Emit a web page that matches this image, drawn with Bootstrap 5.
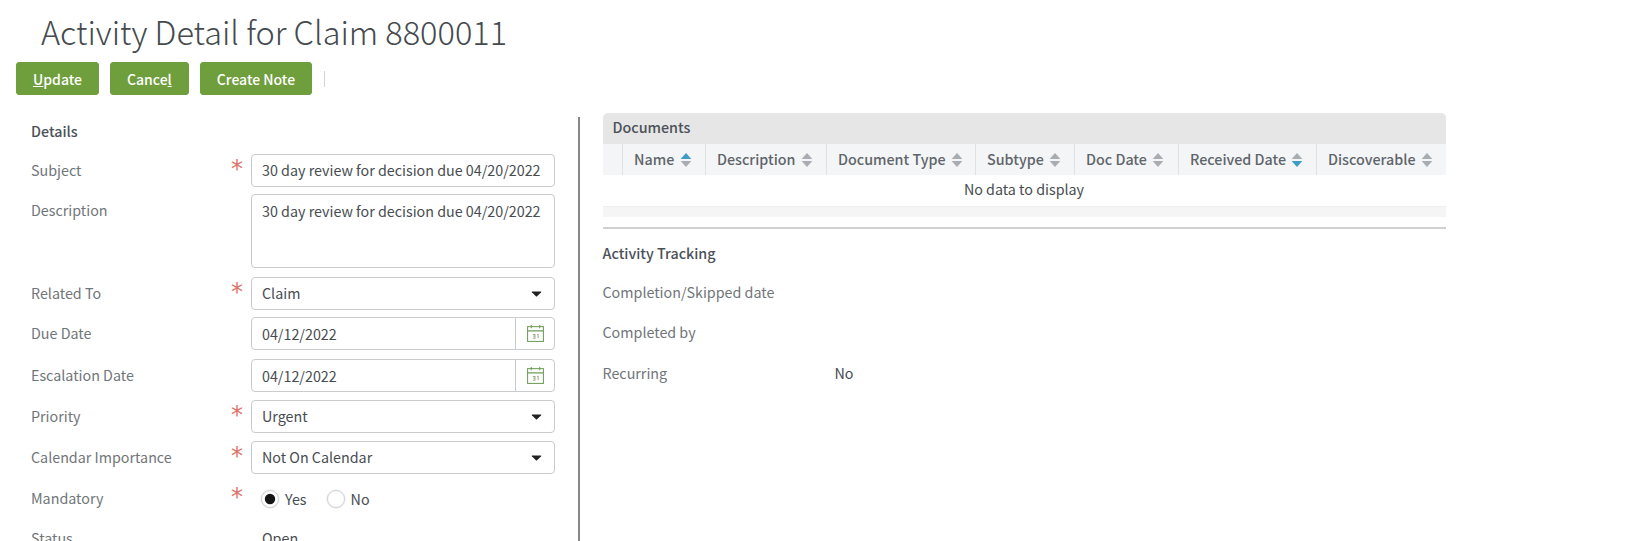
<!DOCTYPE html>
<html lang="en">
<head>
  <meta charset="UTF-8">
  <title>Activity Detail for Claim 8800011</title>
  <link href="https://cdn.jsdelivr.net/npm/bootstrap@5.3.0/dist/css/bootstrap.min.css" rel="stylesheet">
  <style>
    html, body { height: 541px; overflow: hidden; }
    body {
      font-family: "Noto Sans CJK SC", "Noto Sans", sans-serif;
      font-size: 14.3px;
      color: #474c50;
      background: #fff;
    }
    .page-title {
      font-size: 32.5px;
      font-weight: 300;
      line-height: 46px;
      color: #454a4e;
      margin: 0;
      padding: 8px 0 0 41px;
      height: 62px;
    }
    .action-bar { padding-left: 16px; gap: 11px; height: 33px; }
    .btn-claim {
      background: #6f9e3c;
      border: 1px solid #6f9e3c;
      color: #fff;
      font-size: 14px;
      font-weight: 500;
      height: 33px;
      padding: 0 16px;
      line-height: 28px;
      border-radius: 3px;
    }
    .btn-claim:hover { background: #64903a; color: #fff; }
    .bar-sep { width: 1px; height: 16px; background: #d4d4d4; margin-left: 1px; }
    .main-area { margin-top: 18px; }
    .left-pane {
      width: 580px;
      height: 424px;
      margin-top: 4px;
      padding-left: 31px;
      padding-right: 23px;
      border-right: 2px solid #85888a;
      flex: none;
    }
    .right-pane { width: 866px; padding-left: 22.500px; flex: none; }
    .sec-title { font-size: 14.3px; font-weight: 500; color: #4b5158; margin: 0; line-height: 20px; }
    .left-pane .sec-title { padding-top: 4px; height: 37px; }
    .field-row { display: flex; align-items: flex-start; margin-bottom: 8px; min-height: 33px; }
    .field-label { width: 195px; flex: none; line-height: 31px; color: #707579; }
    .field-star {
      width: 22px; margin-right: 3px; flex: none; color: #dc7467;
      font-family: "DejaVu Sans", sans-serif; font-size: 24px; line-height: 31px;
      text-align: center; height: 33px;
    }
    .field-ctl { width: 304px; flex: none; }
    .field-ctl .form-control, .field-ctl .form-select, .field-ctl .input-group-text {
      height: 33px;
      font-size: 14.3px;
      color: #474c50;
      border-color: #c9cccf;
      border-radius: 4px;
      padding: 3px 10px;
      background-color: #fff;
    }
    .field-ctl .form-select { padding: 2px 10px 4px; }
    .field-ctl textarea.form-control { height: 74px; resize: none; padding-top: 5px; line-height: 22px; }
    .field-ctl .form-select {
      background-image: url("data:image/svg+xml,%3csvg xmlns='http://www.w3.org/2000/svg' viewBox='0 0 12 7'%3e%3cpath fill='%23222' d='M1 .5h10a.6.6 0 0 1 .4 1L6.4 6.3a.6.6 0 0 1-.8 0L.6 1.500a.6.6 0 0 1 .4-1z'/%3e%3c/svg%3e");
      background-size: 11px 6px;
      background-position: right 12px center;
    }
    .field-ctl .input-group-text { width: 40px; padding: 0; justify-content: center; }
    .row-tight { margin-bottom: 7px; }
    .row-wide { margin-bottom: 9px; }
    .row-tight .form-control { padding: 2px 10px 4px; }
    .radio-line { height: 33px; padding-left: 10px; gap: 20px; }
    .radio-line .form-check { margin: 0; padding: 0; display: flex; align-items: center; gap: 6px; min-height: 0; }
    .radio-line .form-check-input {
      margin: 0; float: none; width: 18px; height: 18px;
      border-color: #cfd2d4; box-shadow: 0 0 2px #d8d8d8;
    }
    .radio-line .form-check-input:checked {
      background-color: #fff;
      border-color: #cfd2d4;
      background-image: url("data:image/svg+xml,%3csvg xmlns='http://www.w3.org/2000/svg' viewBox='-4 -4 8 8'%3e%3ccircle r='2.600' fill='%23151515'/%3e%3c/svg%3e");
    }
    .radio-line .form-check-label { line-height: 18px; }
    .plain-value { line-height: 31px; padding-left: 11px; }
    .docs-panel { background: #fff; }
    .docs-head {
      background: #e6e6e6;
      height: 31px;
      line-height: 27px;
      padding-left: 10px;
      font-weight: 500;
      color: #4b5158;
      border-radius: 5px 5px 0 0;
    }
    .docs-table { table-layout: fixed; width: 843px; margin: 0; font-size: 14.3px; }
    .docs-table th {
      background: #f4f5f6;
      height: 31px;
      padding: 0 0 2px 11px;
      font-weight: 500;
      color: #5f656b;
      white-space: nowrap;
      vertical-align: middle;
      border-bottom: 0;
      border-left: 1px solid #dfe2e5;
    }
    .docs-table th:first-child { border-left: 0; }
    .docs-table th svg { margin-left: 2px; vertical-align: -3px; }
    .docs-table td {
      height: 31px;
      padding: 0 0 3px;
      text-align: center;
      color: #474c50;
      border-bottom: 1px solid #eeeeee;
      vertical-align: middle;
    }
    .col-a { width: 20px; }
    .col-b { width: 83px; }
    .col-c { width: 121px; }
    .col-d { width: 149px; }
    .col-e { width: 99px; }
    .col-f { width: 104px; }
    .col-g { width: 138px; }
    .col-h { width: 129px; }
    .docs-foot { height: 10px; background: #f5f5f5; }
    .docs-rule { height: 2px; background: #cfd1d2; margin-top: 10px; width: 843px; }
    .track-title { margin-top: 14px; }
    .track-row { display: flex; line-height: 20px; margin-top: 20.500px; color: #707579; }
    .track-first { margin-top: 19px; }
    .track-label { width: 232px; flex: none; }
    .track-value { color: #474c50; }
  </style>
</head>
<body>
  <h1 class="page-title">Activity Detail for Claim 8800011</h1>

  <div class="d-flex align-items-center action-bar">
    <button type="button" class="btn btn-claim"><u>U</u>pdate</button>
    <button type="button" class="btn btn-claim">Cance<u>l</u></button>
    <button type="button" class="btn btn-claim">Create Note</button>
    <span class="bar-sep"></span>
  </div>

  <div class="d-flex main-area">
    <div class="left-pane">
      <h2 class="sec-title">Details</h2>

      <div class="field-row row-tight">
        <div class="field-label">Subject</div>
        <div class="field-star">*</div>
        <div class="field-ctl"><input class="form-control" value="30 day review for decision due 04/20/2022"></div>
      </div>
      <div class="field-row row-wide">
        <div class="field-label">Description</div>
        <div class="field-star"></div>
        <div class="field-ctl"><textarea class="form-control">30 day review for decision due 04/20/2022</textarea></div>
      </div>
      <div class="field-row row-tight">
        <div class="field-label">Related To</div>
        <div class="field-star">*</div>
        <div class="field-ctl"><select class="form-select"><option>Claim</option></select></div>
      </div>
      <div class="field-row row-wide">
        <div class="field-label">Due Date</div>
        <div class="field-star"></div>
        <div class="field-ctl">
          <div class="input-group">
            <input class="form-control" value="04/12/2022">
            <span class="input-group-text">
              <svg width="19" height="19" viewBox="0 0 18 18" fill="none" stroke="#6f9e5a" stroke-width="1">
                <rect x="1.500" y="2.500" width="15" height="14"/><path d="M1.500 6.500h15M5 1v3M13 1v3"/>
                <path d="M6.500 10h2v1.500h-1.500M8.500 11.500v2h-2M10.500 10h1v3.500" stroke="#9bb08a"/>
              </svg>
            </span>
          </div>
        </div>
      </div>
      <div class="field-row">
        <div class="field-label">Escalation Date</div>
        <div class="field-star"></div>
        <div class="field-ctl">
          <div class="input-group">
            <input class="form-control" value="04/12/2022">
            <span class="input-group-text">
              <svg width="19" height="19" viewBox="0 0 18 18" fill="none" stroke="#6f9e5a" stroke-width="1">
                <rect x="1.500" y="2.500" width="15" height="14"/><path d="M1.500 6.500h15M5 1v3M13 1v3"/>
                <path d="M6.500 10h2v1.500h-1.500M8.500 11.500v2h-2M10.500 10h1v3.500" stroke="#9bb08a"/>
              </svg>
            </span>
          </div>
        </div>
      </div>
      <div class="field-row">
        <div class="field-label">Priority</div>
        <div class="field-star">*</div>
        <div class="field-ctl"><select class="form-select"><option>Urgent</option></select></div>
      </div>
      <div class="field-row">
        <div class="field-label">Calendar Importance</div>
        <div class="field-star">*</div>
        <div class="field-ctl"><select class="form-select"><option>Not On Calendar</option></select></div>
      </div>
      <div class="field-row row-tight">
        <div class="field-label">Mandatory</div>
        <div class="field-star">*</div>
        <div class="field-ctl">
          <div class="d-flex align-items-center radio-line">
            <div class="form-check">
              <input class="form-check-input" type="radio" name="mandatory" id="mandYes" checked>
              <label class="form-check-label" for="mandYes">Yes</label>
            </div>
            <div class="form-check">
              <input class="form-check-input" type="radio" name="mandatory" id="mandNo">
              <label class="form-check-label" for="mandNo">No</label>
            </div>
          </div>
        </div>
      </div>
      <div class="field-row">
        <div class="field-label">Status</div>
        <div class="field-star"></div>
        <div class="field-ctl plain-value">Open</div>
      </div>
    </div>

    <div class="right-pane">
      <div class="docs-panel">
        <div class="docs-head">Documents</div>
        <table class="table docs-table">
          <colgroup>
            <col class="col-a"><col class="col-b"><col class="col-c"><col class="col-d">
            <col class="col-e"><col class="col-f"><col class="col-g"><col class="col-h">
          </colgroup>
          <thead>
            <tr>
              <th></th>
              <th>Name <svg width="12" height="16" viewBox="0 0 11 15"><path d="M5.500 1l5 5.500H.5z" fill="#3f9cc4"/><path d="M5.500 14l5-5.500H.5z" fill="#a7adb2"/></svg></th>
              <th>Description <svg width="12" height="16" viewBox="0 0 11 15"><path d="M5.500 1l5 5.500H.5z" fill="#a7adb2"/><path d="M5.500 14l5-5.500H.5z" fill="#a7adb2"/></svg></th>
              <th>Document Type <svg width="12" height="16" viewBox="0 0 11 15"><path d="M5.500 1l5 5.500H.5z" fill="#a7adb2"/><path d="M5.500 14l5-5.500H.5z" fill="#a7adb2"/></svg></th>
              <th>Subtype <svg width="12" height="16" viewBox="0 0 11 15"><path d="M5.500 1l5 5.500H.5z" fill="#a7adb2"/><path d="M5.500 14l5-5.500H.5z" fill="#a7adb2"/></svg></th>
              <th>Doc Date <svg width="12" height="16" viewBox="0 0 11 15"><path d="M5.500 1l5 5.500H.5z" fill="#a7adb2"/><path d="M5.500 14l5-5.500H.5z" fill="#a7adb2"/></svg></th>
              <th>Received Date <svg width="12" height="16" viewBox="0 0 11 15"><path d="M5.500 1l5 5.500H.5z" fill="#a7adb2"/><path d="M5.500 14l5-5.500H.5z" fill="#3f9cc4"/></svg></th>
              <th>Discoverable <svg width="12" height="16" viewBox="0 0 11 15"><path d="M5.500 1l5 5.500H.5z" fill="#a7adb2"/><path d="M5.500 14l5-5.500H.5z" fill="#a7adb2"/></svg></th>
            </tr>
          </thead>
          <tbody>
            <tr><td colspan="8">No data to display</td></tr>
          </tbody>
        </table>
        <div class="docs-foot"></div>
      </div>
      <div class="docs-rule"></div>

      <h2 class="sec-title track-title">Activity Tracking</h2>
      <div class="track-row track-first"><div class="track-label">Completion/Skipped date</div></div>
      <div class="track-row"><div class="track-label">Completed by</div></div>
      <div class="track-row"><div class="track-label">Recurring</div><div class="track-value">No</div></div>
    </div>
  </div>
</body>
</html>
